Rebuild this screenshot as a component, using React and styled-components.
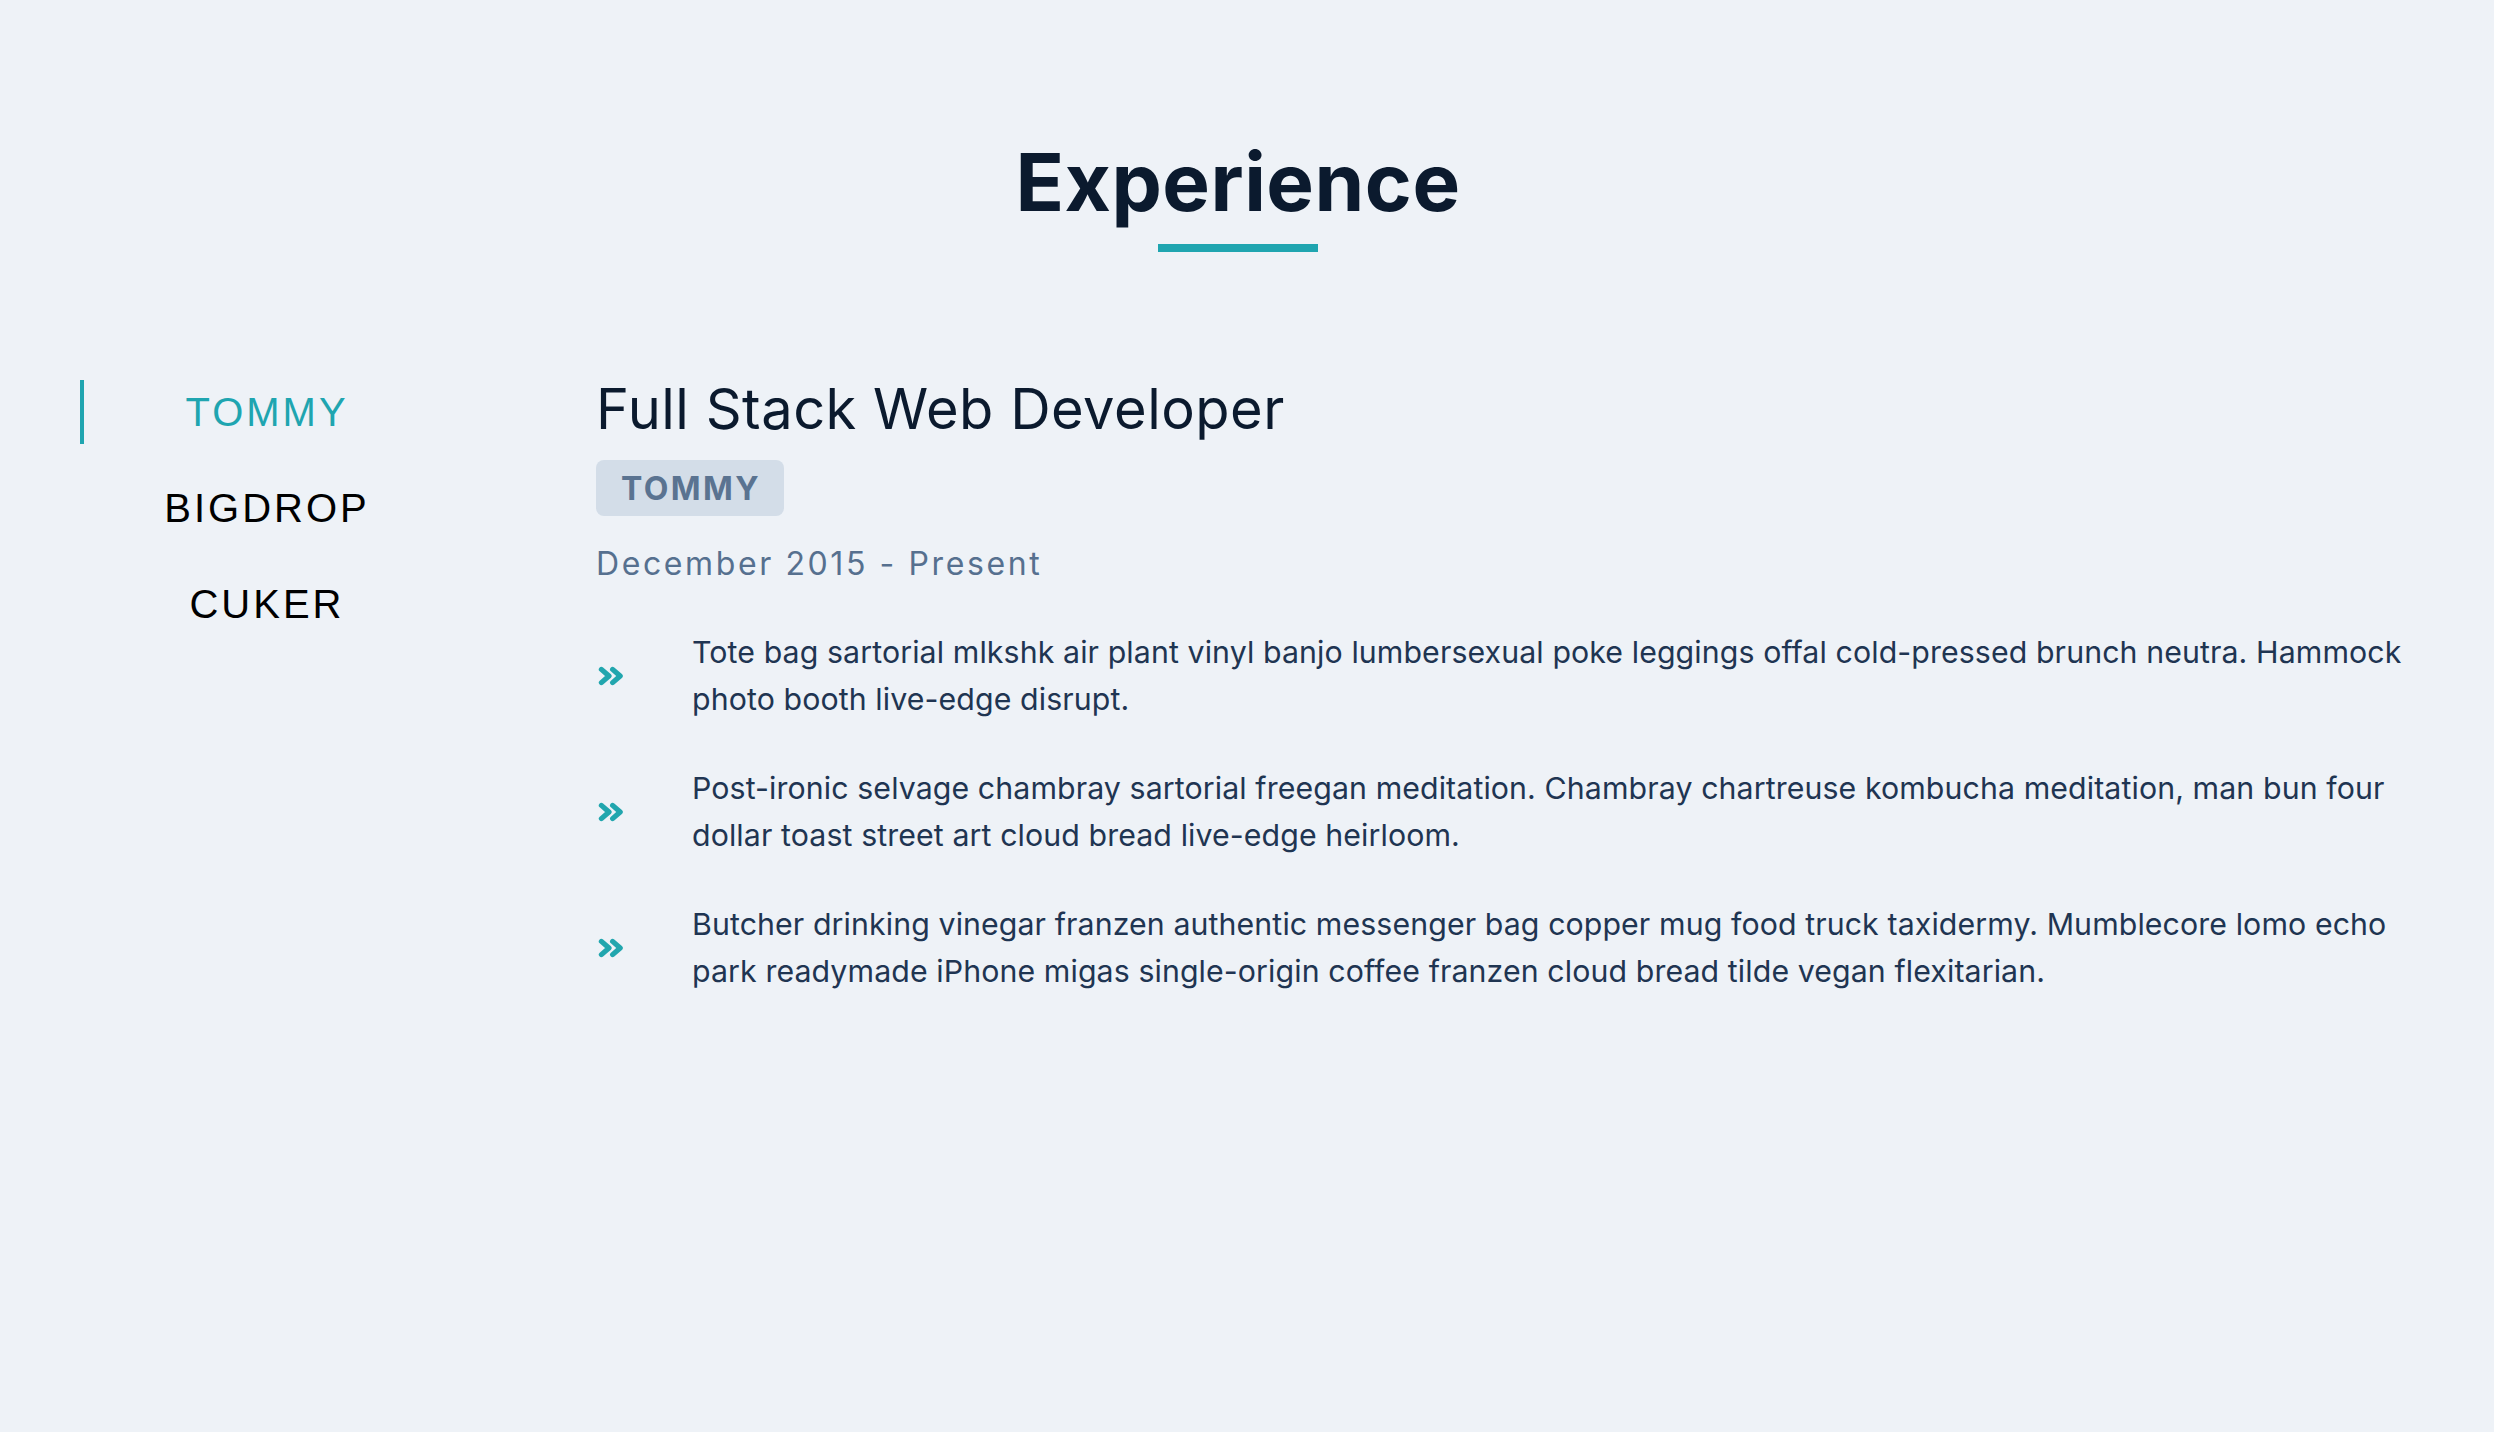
import { useState } from 'react';
import styled, { createGlobalStyle } from 'styled-components';

const GlobalStyle = createGlobalStyle`
  html, body {
    margin: 0;
    padding: 0;
    background: #eef2f7;
  }
  body {
    font-family: Inter, 'Noto Sans', sans-serif;
    color: #0b1a2e;
  }
`;

const Section = styled.section`
  min-height: 1432px;
  box-sizing: border-box;
  padding: 134px 70px 0 80px;
`;

const Header = styled.header`
  display: flex;
  flex-direction: column;
  align-items: center;
  padding-right: 28px;
`;

const Title = styled.h2`
  margin: 0;
  font-size: 80px;
  line-height: 96px;
  font-weight: 700;
  letter-spacing: 0.5px;
  color: #0b1a2e;
`;

const Underline = styled.span`
  display: block;
  width: 160px;
  height: 8px;
  margin-top: 14px;
  background: #1fa5b0;
`;

const Body = styled.div`
  display: grid;
  grid-template-columns: 370px 1fr;
  column-gap: 146px;
  margin-top: 124px;
`;

const Tabs = styled.nav`
  display: flex;
  flex-direction: column;
  gap: 32px;
  padding-top: 4px;
`;

const Tab = styled.button`
  display: flex;
  align-items: center;
  justify-content: center;
  height: 64px;
  padding: 0;
  border: none;
  border-left: 4px solid ${({ active }) => (active ? '#1fa5b0' : 'transparent')};
  background: transparent;
  font-family: 'Liberation Sans', Arial, sans-serif;
  font-size: 40px;
  letter-spacing: 3px;
  color: ${({ active }) => (active ? '#1fa5b0' : '#000')};
  cursor: pointer;
`;

const Job = styled.article`
  display: flex;
  flex-direction: column;
  align-items: flex-start;
`;

const JobTitle = styled.h3`
  margin: 0;
  font-size: 56px;
  line-height: 67px;
  font-weight: 400;
  letter-spacing: 0.5px;
  color: #0b1a2e;
`;

const Company = styled.span`
  display: inline-flex;
  align-items: center;
  height: 56px;
  margin-top: 17px;
  padding: 0 23px 0 25px;
  border-radius: 8px;
  background: #d3dde8;
  color: #5a7391;
  font-size: 32px;
  font-weight: 700;
  letter-spacing: 2.4px;
`;

const Dates = styled.p`
  margin: 29px 0 0;
  font-size: 32px;
  line-height: 38px;
  letter-spacing: 2.6px;
  color: #56708f;
`;

const Duties = styled.ul`
  list-style: none;
  margin: 46px 0 0;
  padding: 0;
  display: flex;
  flex-direction: column;
  gap: 43px;
`;

const Duty = styled.li`
  display: grid;
  grid-template-columns: 96px 1fr;
  align-items: center;
`;

const DutyIcon = styled.svg`
  width: 27px;
  height: 20px;
  margin-left: 2px;
`;

const DutyText = styled.p`
  margin: 0;
  font-size: 30.3px;
  line-height: 46.5px;
  letter-spacing: 0.1px;
  color: #1f3552;
`;

const Chevrons = () => (
  <DutyIcon viewBox="0 0 27 20" fill="none" stroke="#21a6ae" strokeWidth="5.2" strokeLinecap="round" strokeLinejoin="round">
    <polyline points="3.4,3.4 11,10 3.4,16.6" />
    <polyline points="14.6,3.4 22.2,10 14.6,16.6" />
  </DutyIcon>
);

const jobs = {
  TOMMY: {
    title: 'Full Stack Web Developer',
    dates: 'December 2015 - Present',
    duties: [
      'Tote bag sartorial mlkshk air plant vinyl banjo lumbersexual poke leggings offal cold-pressed brunch neutra. Hammock photo booth live-edge disrupt.',
      'Post-ironic selvage chambray sartorial freegan meditation. Chambray chartreuse kombucha meditation, man bun four dollar toast street art cloud bread live-edge heirloom.',
      'Butcher drinking vinegar franzen authentic messenger bag copper mug food truck taxidermy. Mumblecore lomo echo park readymade iPhone migas single-origin coffee franzen cloud bread tilde vegan flexitarian.',
    ],
  },
  BIGDROP: {
    title: 'Front-End Engineer',
    dates: 'May 2015 - December 2015',
    duties: ['Hashtag typewriter dreamcatcher, fishtail health goth banjo taiyaki.'],
  },
  CUKER: {
    title: 'Engineering Intern',
    dates: 'May 2014 - September 2015',
    duties: ['I am baby woke mlkshk wolf bitters live-edge blue bottle.'],
  },
};

export default function App() {
  const [company, setCompany] = useState('TOMMY');
  const job = jobs[company];

  return (
    <>
      <GlobalStyle />
      <Section>
        <Header>
          <Title>Experience</Title>
          <Underline />
        </Header>
        <Body>
          <Tabs>
            {Object.keys(jobs).map((name) => (
              <Tab key={name} active={name === company} onClick={() => setCompany(name)}>
                {name}
              </Tab>
            ))}
          </Tabs>
          <Job>
            <JobTitle>{job.title}</JobTitle>
            <Company>{company}</Company>
            <Dates>{job.dates}</Dates>
            <Duties>
              {job.duties.map((duty) => (
                <Duty key={duty}>
                  <Chevrons />
                  <DutyText>{duty}</DutyText>
                </Duty>
              ))}
            </Duties>
          </Job>
        </Body>
      </Section>
    </>
  );
}
